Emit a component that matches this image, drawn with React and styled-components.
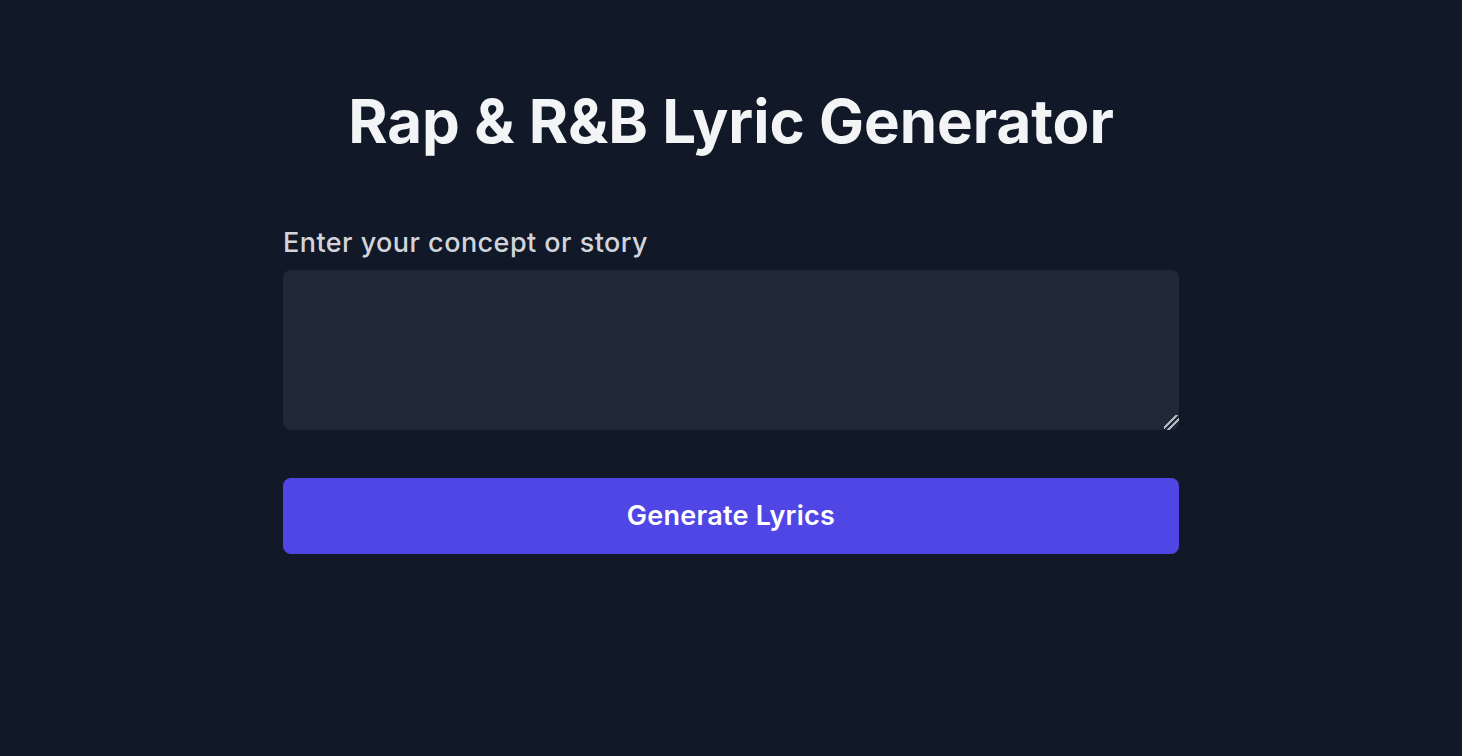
import React, { useState } from "react";
import styled, { createGlobalStyle } from "styled-components";

const GlobalStyle = createGlobalStyle`
  html, body {
    margin: 0;
    padding: 0;
    background-color: #111827;
    font-family: Inter, "Noto Sans", "Liberation Sans", sans-serif;
  }
  * {
    box-sizing: border-box;
  }
`;

const Page = styled.div`
  min-height: 100vh;
  background-color: #111827;
  padding-top: 91px;
`;

const Container = styled.div`
  width: 896px;
  max-width: 100%;
  margin: 0 auto;
`;

const Title = styled.h1`
  margin: 0 0 76px;
  font-size: 60px;
  line-height: 60px;
  font-weight: 700;
  color: #f3f4f6;
  text-align: center;
`;

const Label = styled.label`
  display: block;
  margin-bottom: 11px;
  font-size: 27px;
  line-height: 32px;
  letter-spacing: 0.45px;
  font-weight: 500;
  color: #d1d5db;
`;

const TextArea = styled.textarea`
  display: block;
  width: 100%;
  height: 160px;
  padding: 16px;
  border: none;
  border-radius: 8px;
  background-color: #1f2937;
  color: #f3f4f6;
  font-family: inherit;
  font-size: 18px;
  outline: none;
  resize: vertical;

  &::-webkit-resizer {
    background: linear-gradient(
      135deg,
      transparent 40%,
      #b4b8bf 40%,
      #b4b8bf 47%,
      transparent 47%,
      transparent 60%,
      #b4b8bf 60%,
      #b4b8bf 67%,
      transparent 67%
    );
  }
`;

const Button = styled.button`
  display: block;
  width: 100%;
  margin-top: 48px;
  padding: 22px 0;
  border: none;
  border-radius: 8px;
  background-color: #4f46e5;
  color: #ffffff;
  font-family: inherit;
  font-size: 27px;
  line-height: 32px;
  letter-spacing: 0.25px;
  font-weight: 600;
  cursor: pointer;
`;

function App() {
  const [concept, setConcept] = useState("");

  return (
    <>
      <GlobalStyle />
      <Page>
        <Container>
          <Title>Rap &amp; R&amp;B Lyric Generator</Title>
          <Label htmlFor="concept">Enter your concept or story</Label>
          <TextArea
            id="concept"
            value={concept}
            onChange={(e) => setConcept(e.target.value)}
          />
          <Button>Generate Lyrics</Button>
        </Container>
      </Page>
    </>
  );
}

export default App;
